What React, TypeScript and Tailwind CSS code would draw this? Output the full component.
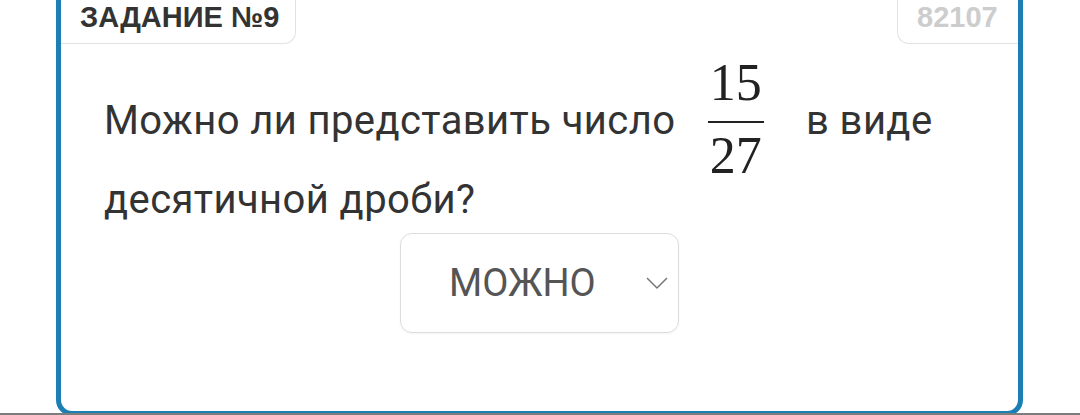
import React from "react";

// Карточка задания: вкладки сверху, вопрос с дробью, выпадающий ответ
function Fraction({ num, den }: { num: string; den: string }) {
  return (
    <span
      className="inline-flex flex-col items-center align-[34px] ml-[22px] mr-[32px] text-[52px] leading-[1] tracking-normal text-[#222]"
      style={{ fontFamily: '"Liberation Serif", "DejaVu Serif", serif' }}
    >
      <span className="px-[2px] pb-[12px]">{num}</span>
      <span className="block w-full h-[2px] bg-[#222]" />
      <span className="px-[2px] pt-[7px]">{den}</span>
    </span>
  );
}

export default function App() {
  return (
    <div
      className="relative h-[415px] w-[1080px] overflow-hidden bg-white"
      style={{ fontFamily: 'Roboto, "Noto Sans", sans-serif' }}
    >
      <div className="ml-[56px] mt-[-20px] w-[967px] h-[436px] border-[5px] border-[#1b7fb6] rounded-[16px] flex flex-col">
        {/* вкладки */}
        <div className="flex justify-between" style={{ fontFamily: '"Liberation Sans", Arial, sans-serif' }}>
          <div className="h-[59px] w-[235px] border-r border-b border-[#e2e2e2] rounded-br-[12px] flex items-end pb-[11px] pl-[19px]">
            <span className="text-[29px] font-bold text-[#333] leading-none">ЗАДАНИЕ №9</span>
          </div>
          <div className="h-[59px] w-[121px] border-l border-b border-[#e2e2e2] rounded-bl-[12px] flex items-end pb-[11px] pl-[19px]">
            <span className="text-[29px] font-bold text-[#cdcdcd] leading-none">82107</span>
          </div>
        </div>

        {/* вопрос */}
        <p className="pl-[43px] pr-[40px] mt-[13px] text-[40px] leading-[36px] tracking-[0.4px] text-[#333]">
          Можно ли представить число <Fraction num="15" den="27" /> в виде десятичной дроби?
        </p>

        {/* ответ */}
        <div className="flex justify-center mt-[15px]">
          <div className="w-[279px] h-[100px] border border-[#dcdcdc] rounded-[12px] flex items-center justify-between pl-[48px] pr-[10px] shadow-[0_1px_2px_rgba(0,0,0,0.05)]">
            <span className="text-[38px] text-[#555] leading-none">МОЖНО</span>
            <svg width="22" height="13" viewBox="0 0 22 13" fill="none">
              <polyline points="1,1 11,11 21,1" stroke="#777" strokeWidth="1.5" />
            </svg>
          </div>
        </div>
      </div>
      <div className="absolute left-0 right-0 bottom-0 h-[2px] bg-[#7d7d7d]" />
    </div>
  );
}
